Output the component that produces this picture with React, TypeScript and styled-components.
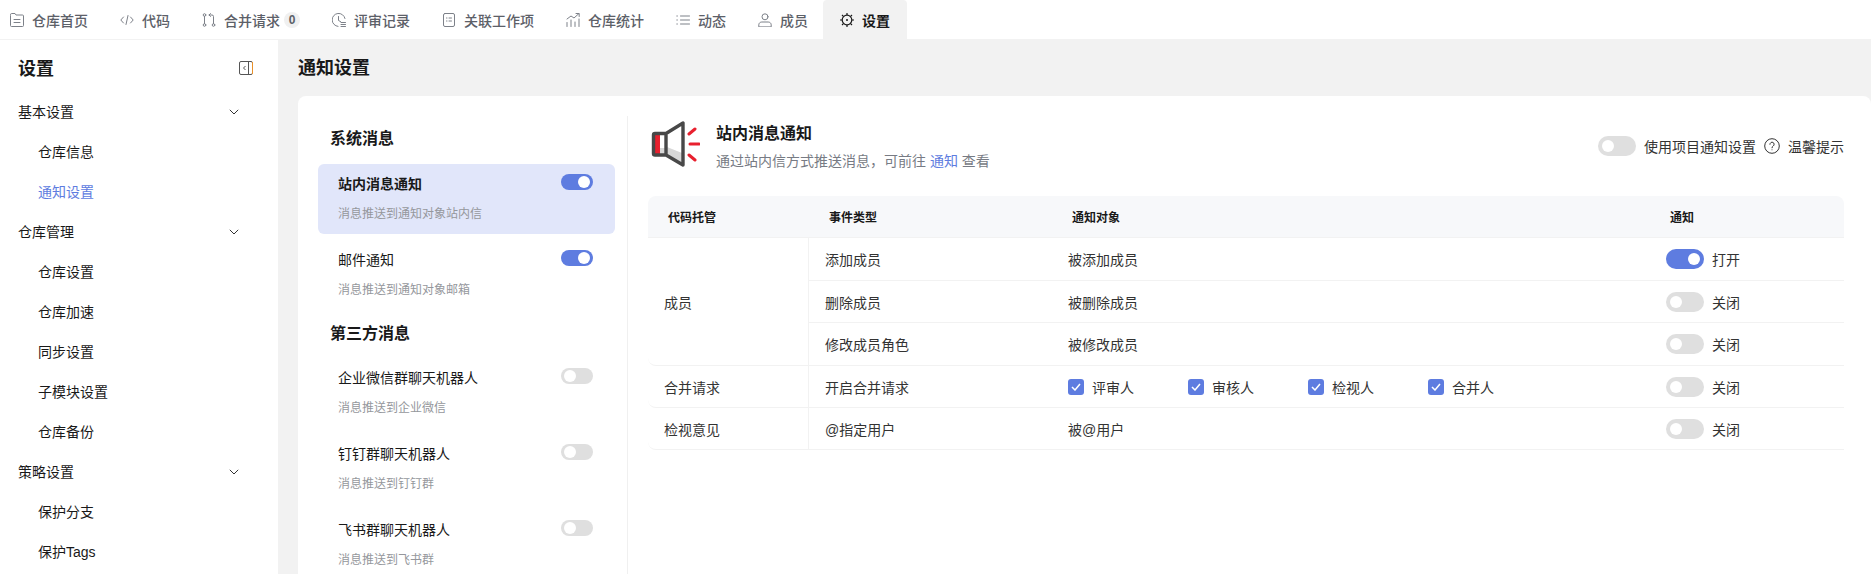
import React from "react";
import styled, { createGlobalStyle } from "styled-components";

const Global = createGlobalStyle`
  html, body { margin: 0; padding: 0; height: 574px; overflow: hidden; background: #fff; }
  body { font-family: "Liberation Sans", "Noto Sans CJK SC", sans-serif; font-size: 14px; color: #191919; }
  * { box-sizing: border-box; }
`;

const Page = styled.div`
  width: 1871px;
  height: 574px;
  display: flex;
  flex-direction: column;
  overflow: hidden;
`;
const TopNav = styled.nav`
  flex: none;
  height: 40px;
  display: flex;
  border-bottom: 1px solid #f2f2f2;
  padding-left: 0;
`;
const NavList = styled.div`
  display: flex;
  margin-left: -6px;
`;
const Tab = styled.div<{ $active?: boolean }>`
  height: 39px;
  display: flex;
  align-items: center;
  gap: 8px;
  padding: 0 ${(p) => (p.$active ? 17 : 16)}px;
  margin: 0 ${(p) => (p.$active ? -1 : 0)}px;
  font-weight: ${(p) => (p.$active ? 700 : 500)};
  color: ${(p) => (p.$active ? "#191919" : "#5c6068")};
  background: ${(p) => (p.$active ? "#f2f2f2" : "transparent")};
  border-radius: 4px 4px 0 0;
  svg { flex: none; color: ${(p) => (p.$active ? "#191919" : "#7d8189")}; }
`;
const Badge = styled.span`
  width: 16px;
  height: 16px;
  margin-left: -4px;
  border-radius: 8px;
  background: #f0f0f0;
  font-size: 12px;
  font-weight: 700;
  line-height: 16px;
  text-align: center;
  color: #5c6068;
`;
const Body = styled.div`
  flex: 1;
  display: flex;
  min-height: 0;
`;
const Sidebar = styled.aside`
  flex: none;
  width: 278px;
  padding: 8px 0 0 18px;
`;
const SideHead = styled.div`
  height: 40px;
  display: flex;
  align-items: center;
  justify-content: space-between;
  padding: 0 25px 2px 0;
  margin-bottom: 4px;
  font-size: 18px;
  font-weight: 700;
  svg { margin-top: 1px; }
`;
const SideGroup = styled.div`
  height: 40px;
  display: flex;
  align-items: center;
  justify-content: space-between;
  padding: 0 39px 2px 0;
  svg { margin-top: 2px; }
`;
const SideLink = styled.div<{ $active?: boolean }>`
  height: 40px;
  line-height: 40px;
  padding-left: 20px;
  color: ${(p) => (p.$active ? "#5e7ce0" : "#191919")};
`;
const Main = styled.main`
  flex: 1;
  min-width: 0;
  background: #f2f2f2;
  padding-left: 20px;
`;
const MainTitle = styled.h1`
  margin: 0;
  height: 56px;
  line-height: 56px;
  font-size: 18px;
  font-weight: 700;
`;
const Card = styled.section`
  height: 500px;
  display: flex;
  background: #fff;
  border-radius: 8px 8px 0 0;
  padding-top: 20px;
`;
const LeftCol = styled.div`
  flex: none;
  width: 330px;
  padding: 12px 12px 0 20px;
  border-right: 1px solid #f0f0f0;
`;
const SectionTitle = styled.h2<{ $spaced?: boolean }>`
  margin: ${(p) => (p.$spaced ? "13px 0 13px 12px" : "0 0 14px 12px")};
  font-size: 16px;
  line-height: 22px;
  font-weight: 700;
`;
const MsgItem = styled.div<{ $selected?: boolean }>`
  height: 70px;
  margin-bottom: 6px;
  padding: 10px 22px 10px 20px;
  border-radius: 6px;
  background: ${(p) => (p.$selected ? "#e1e6fa" : "transparent")};
`;
const MsgTop = styled.div<{ $selected?: boolean }>`
  display: flex;
  justify-content: space-between;
  line-height: 20px;
  font-weight: ${(p) => (p.$selected ? 700 : 400)};
`;
const MsgDesc = styled.div`
  margin-top: 10px;
  font-size: 12px;
  line-height: 20px;
  color: #95979c;
`;
const Knob = styled.span<{ $on?: boolean; $large?: boolean }>`
  position: absolute;
  top: ${(p) => (p.$large ? 4 : 2)}px;
  ${(p) => (p.$on ? "right" : "left")}: ${(p) => (p.$large ? 4 : 3)}px;
  width: 12px;
  height: 12px;
  border-radius: 50%;
  background: #fff;
`;
const Track = styled.span<{ $on?: boolean; $large?: boolean }>`
  position: relative;
  flex: none;
  display: block;
  width: ${(p) => (p.$large ? 38 : 32)}px;
  height: ${(p) => (p.$large ? 20 : 16)}px;
  border-radius: 10px;
  background: ${(p) => (p.$on ? "#5e7ce0" : "#dfdfdf")};
`;
const Panel = styled.div`
  flex: 1;
  min-width: 0;
  padding: 0 27px 0 20px;
`;
const PanelHead = styled.header`
  height: 80px;
  padding-top: 3px;
  display: flex;
  gap: 16px;
`;
const HeadText = styled.div`
  flex: 1;
  padding-top: 4px;
`;
const HeadTitle = styled.div`
  font-size: 16px;
  line-height: 22px;
  font-weight: 700;
`;
const HeadSub = styled.div`
  margin-top: 5px;
  line-height: 22px;
  color: #777b84;
`;
const Link = styled.span`
  color: #5e7ce0;
`;
const HeadTools = styled.div`
  display: flex;
  align-items: center;
  height: 20px;
  margin-top: 17px;
  color: #333;
  svg { margin: 0 8px; }
  span + span { margin-left: 8px; }
`;
const Table = styled.table`
  width: 1196px;
  table-layout: fixed;
  border-collapse: separate;
  border-spacing: 0;
`;
const Th = styled.th<{ $w: number }>`
  width: ${(p) => p.$w}px;
  height: 42px;
  padding: 0 0 0 20px;
  text-align: left;
  font-size: 12px;
  font-weight: 700;
  background: #f7f8fa;
  border-bottom: 1px solid #f2f2f2;
  &:first-child { border-top-left-radius: 8px; }
  &:last-child { border-top-right-radius: 8px; }
`;
const Row = styled.tr<{ $h: number }>`
  height: ${(p) => p.$h}px;
`;
const Td = styled.td<{ $group?: boolean }>`
  padding: 0 0 0 16px;
  color: #333;
  border-bottom: 1px solid #f2f2f2;
  ${(p) => (p.$group ? "border-right: 1px solid #f2f2f2; border-bottom-left-radius: 8px;" : "")}
`;
const SwitchCell = styled.div`
  display: flex;
  align-items: center;
  gap: 8px;
`;
const Checks = styled.div`
  display: flex;
`;
const Check = styled.label`
  width: 120px;
  display: flex;
  align-items: center;
  gap: 8px;
`;
const Box = styled.span`
  width: 16px;
  height: 16px;
  border-radius: 3px;
  background: #5e7ce0;
  display: flex;
  align-items: center;
  justify-content: center;
`;

const I = ({ children }: { children: React.ReactNode }) => (
  <svg width="14" height="14" viewBox="0 0 14 14" fill="none" stroke="currentColor" strokeWidth="1" strokeLinecap="round" strokeLinejoin="round">
    {children}
  </svg>
);

const tabs: [string, React.ReactNode][] = [
  ["仓库首页", <I><path d="M.5 3V12.5a1 1 0 0 0 1 1h11a1 1 0 0 0 1-1V3a1 1 0 0 0-1-1H6L5 .5H1.5a1 1 0 0 0-1 1z" /><path d="M4 6.5h6M4 9.5h6" /></I>],
  ["代码", <I><path d="M3.5 4 .8 7l2.7 3M10.5 4l2.7 3-2.7 3M8 2.5 6 11.5" /></I>],
  ["合并请求", <I><circle cx="2.5" cy="2" r="1.3" /><circle cx="2.5" cy="12" r="1.3" /><circle cx="11.5" cy="12" r="1.3" /><path d="M2.5 3.3v7.4M11.5 10.7V3.5a1.5 1.5 0 0 0-1.5-1.5H7M8.5.5 7 2l1.5 1.5" /></I>],
  ["评审记录", <I><path d="M13 5.5A6.5 6.5 0 1 0 6 13.4" /><path d="M6.5 3.5v4l2 1M9 9.5h4.5M9 11.5h4.5M9 13.5h4.5" /></I>],
  ["关联工作项", <I><rect x="1.5" y=".5" width="11" height="13" rx="1.5" /><path d="M4.5 5h.5M7 5h2.5M4.5 8h.5M7 8h2.5" /></I>],
  ["仓库统计", <I><path d="M1 9.5v4M5 7v6.5M9 9v4.5M13 6v7.5M1 6l4-3 3 2 5-4.5M10 .5h3.2v3" /></I>],
  ["动态", <I><path d="M.8 3h.6M.8 7h.6M.8 11h.6M4.5 3h9M4.5 7h9M4.5 11h9" /></I>],
  ["成员", <I><circle cx="7" cy="3.8" r="3" /><path d="M.8 13.5v-1.7c0-1.6 1.4-2.8 3-2.8h6.4c1.6 0 3 1.2 3 2.8v1.7z" /></I>],
];

const Chevron = () => (
  <svg width="10" height="6" viewBox="0 0 10 6" fill="none" stroke="#333" strokeWidth="1">
    <path d="M.8.8 5 5 9.2.8" />
  </svg>
);
const CollapseIcon = () => (
  <svg width="14" height="14" viewBox="0 0 14 14" fill="none">
    <rect x=".5" y=".5" width="13" height="13" rx="1.5" stroke="#555" />
    <path d="M9.5 1v12" stroke="#555" />
    <path d="M6.5 5 4.5 7l2 2" stroke="#555" />
    <path d="M13.5 1v12" stroke="#e8902a" />
  </svg>
);
const Speaker = () => (
  <svg width="52" height="50" viewBox="0 0 52 50" style={{ flex: "none" }}>
    <path d="M7 29h11v7H7zM19 28l15 6v12L19 36z" fill="#d8d8d8" />
    <rect x="7" y="16" width="5" height="19" fill="#e8202e" />
    <path d="M18 14.500 35 4v42L18 36H7a1.500 1.500 0 0 1-1.500-1.500v-18.500A1.500 1.500 0 0 1 7 14.500zM18 14.500V36" fill="none" stroke="#484848" strokeWidth="3.400" strokeLinejoin="round" />
    <path d="M41 15l6-5M42 25h9M41 36l6 5" stroke="#e8202e" strokeWidth="3" strokeLinecap="round" />
  </svg>
);
const Help = () => (
  <svg width="16" height="16" viewBox="0 0 16 16" fill="none" stroke="#333" strokeWidth="1">
    <circle cx="8" cy="8" r="7.300" />
    <path d="M5.900 6.300a2.100 2.100 0 1 1 3.300 1.700c-.8.500-1.200 1-1.200 1.800" strokeLinecap="round" />
    <circle cx="8" cy="11.800" r=".5" fill="#333" stroke="none" />
  </svg>
);
const Gear = () => (
  <svg width="14" height="14" viewBox="0 0 14 14" fill="none" stroke="currentColor" strokeWidth="1.200">
    <circle cx="7" cy="7" r="4.800" />
    <circle cx="7" cy="7" r="1" fill="currentColor" stroke="none" />
    <path d="M7 0v2M7 12v2M0 7h2M12 7h2M2 2l1.400 1.400M10.600 10.600 12 12M2 12l1.400-1.400M10.600 3.400 12 2" />
  </svg>
);

const Switch = ({ on, large }: { on?: boolean; large?: boolean }) => (
  <Track $on={on} $large={large}>
    <Knob $on={on} $large={large} />
  </Track>
);

const Toggle = ({ on }: { on?: boolean }) => (
  <SwitchCell>
    <Switch on={on} large />
    <span>{on ? "打开" : "关闭"}</span>
  </SwitchCell>
);

const Msg = ({ title, desc, on, selected }: { title: string; desc: string; on?: boolean; selected?: boolean }) => (
  <MsgItem $selected={selected}>
    <MsgTop $selected={selected}>
      <span>{title}</span>
      <Switch on={on} />
    </MsgTop>
    <MsgDesc>{desc}</MsgDesc>
  </MsgItem>
);

const CheckItem = ({ label }: { label: string }) => (
  <Check>
    <Box>
      <svg width="10" height="8" viewBox="0 0 10 8" fill="none" stroke="#fff" strokeWidth="1.500">
        <path d="M1 4l3 3 5-6" />
      </svg>
    </Box>
    {label}
  </Check>
);

export default function App() {
  return (
    <Page>
      <Global />
      <TopNav>
        <NavList>
          {tabs.map(([label, icon]) => (
            <Tab key={label}>
              {icon}
              <span>{label}</span>
              {label === "合并请求" && <Badge>0</Badge>}
            </Tab>
          ))}
          <Tab $active>
            <Gear />
            <span>设置</span>
          </Tab>
        </NavList>
      </TopNav>
      <Body>
        <Sidebar>
          <SideHead>
            设置
            <CollapseIcon />
          </SideHead>
          <SideGroup>基本设置<Chevron /></SideGroup>
          <SideLink>仓库信息</SideLink>
          <SideLink $active>通知设置</SideLink>
          <SideGroup>仓库管理<Chevron /></SideGroup>
          <SideLink>仓库设置</SideLink>
          <SideLink>仓库加速</SideLink>
          <SideLink>同步设置</SideLink>
          <SideLink>子模块设置</SideLink>
          <SideLink>仓库备份</SideLink>
          <SideGroup>策略设置<Chevron /></SideGroup>
          <SideLink>保护分支</SideLink>
          <SideLink>保护Tags</SideLink>
        </Sidebar>
        <Main>
          <MainTitle>通知设置</MainTitle>
          <Card>
            <LeftCol>
              <SectionTitle>系统消息</SectionTitle>
              <Msg selected on title="站内消息通知" desc="消息推送到通知对象站内信" />
              <Msg on title="邮件通知" desc="消息推送到通知对象邮箱" />
              <SectionTitle $spaced>第三方消息</SectionTitle>
              <Msg title="企业微信群聊天机器人" desc="消息推送到企业微信" />
              <Msg title="钉钉群聊天机器人" desc="消息推送到钉钉群" />
              <Msg title="飞书群聊天机器人" desc="消息推送到飞书群" />
            </LeftCol>
            <Panel>
              <PanelHead>
                <Speaker />
                <HeadText>
                  <HeadTitle>站内消息通知</HeadTitle>
                  <HeadSub>
                    通过站内信方式推送消息，可前往 <Link>通知</Link> 查看
                  </HeadSub>
                </HeadText>
                <HeadTools>
                  <Switch large />
                  <span>使用项目通知设置</span>
                  <Help />
                  <span>温馨提示</span>
                </HeadTools>
              </PanelHead>
              <Table>
                <thead>
                  <tr>
                    <Th $w={161}>代码托管</Th>
                    <Th $w={243}>事件类型</Th>
                    <Th $w={598}>通知对象</Th>
                    <Th $w={194}>通知</Th>
                  </tr>
                </thead>
                <tbody>
                  <Row $h={43}>
                    <Td $group rowSpan={3}>成员</Td>
                    <Td>添加成员</Td>
                    <Td>被添加成员</Td>
                    <Td><Toggle on /></Td>
                  </Row>
                  <Row $h={42}>
                    <Td>删除成员</Td>
                    <Td>被删除成员</Td>
                    <Td><Toggle /></Td>
                  </Row>
                  <Row $h={43}>
                    <Td>修改成员角色</Td>
                    <Td>被修改成员</Td>
                    <Td><Toggle /></Td>
                  </Row>
                  <Row $h={42}>
                    <Td $group>合并请求</Td>
                    <Td>开启合并请求</Td>
                    <Td>
                      <Checks>
                        <CheckItem label="评审人" />
                        <CheckItem label="审核人" />
                        <CheckItem label="检视人" />
                        <CheckItem label="合并人" />
                      </Checks>
                    </Td>
                    <Td><Toggle /></Td>
                  </Row>
                  <Row $h={42}>
                    <Td $group>检视意见</Td>
                    <Td>@指定用户</Td>
                    <Td>被@用户</Td>
                    <Td><Toggle /></Td>
                  </Row>
                </tbody>
              </Table>
            </Panel>
          </Card>
        </Main>
      </Body>
    </Page>
  );
}
